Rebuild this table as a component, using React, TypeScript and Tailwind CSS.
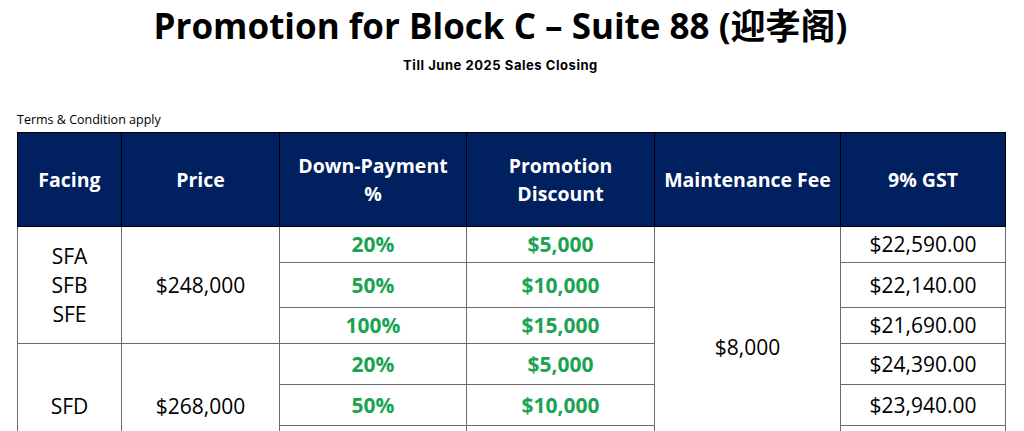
import React from 'react';

const rows = [
  { dp: '20%', disc: '$5,000', gst: '$22,590.00', h: 'h-[36px]' },
  { dp: '50%', disc: '$10,000', gst: '$22,140.00', h: 'h-[45px]' },
  { dp: '100%', disc: '$15,000', gst: '$21,690.00', h: 'h-[36px]' },
  { dp: '20%', disc: '$5,000', gst: '$24,390.00', h: 'h-[41px]' },
  { dp: '50%', disc: '$10,000', gst: '$23,940.00', h: 'h-[41px]' },
  { dp: '100%', disc: '$15,000', gst: '$23,490.00', h: 'h-[43px]' },
];

const cell = 'border border-[#6b6b6b] text-center align-middle p-0';
const head = 'border border-black text-center align-middle font-bold text-white text-[19.5px] leading-[28px] p-0';

export default function App() {
  return (
    <div className="min-h-screen bg-white text-black font-['Open_Sans',sans-serif]">
      <h1 className="pt-[4px] pr-[23px] text-center text-[35px] leading-[44px] font-bold font-['Open_Sans','Noto_Sans_CJK_SC',sans-serif]">
        Promotion for Block C – Suite 88 (迎孝阁)
      </h1>
      <p className="mt-[9px] pr-[23px] text-center text-[13px] leading-[16px] font-bold tracking-[0.55px] font-['Inter',sans-serif]">
        Till June 2025 Sales Closing
      </p>
      <p className="mt-[39px] pl-[17px] text-[12.5px] leading-[16px]">Terms &amp; Condition apply</p>
      <div className="px-[17px] mt-[4px]">
        <table className="w-[988px] table-fixed border-collapse">
          <colgroup>
            <col className="w-[104px]" />
            <col className="w-[158px]" />
            <col className="w-[187px]" />
            <col className="w-[188px]" />
            <col className="w-[186px]" />
            <col className="w-[165px]" />
          </colgroup>
          <thead>
            <tr className="h-[94px] bg-[#002060]">
              <th className={head}>Facing</th>
              <th className={head}>Price</th>
              <th className={head}>Down-Payment<br />%</th>
              <th className={head}>Promotion<br />Discount</th>
              <th className={head}>Maintenance Fee</th>
              <th className={head}>9% GST</th>
            </tr>
          </thead>
          <tbody className="text-[21px] leading-[29px]">
            {rows.map((r, i) => (
              <tr key={i} className={r.h}>
                {i === 0 && (
                  <td rowSpan={3} className={cell}>SFA<br />SFB<br />SFE</td>
                )}
                {i === 0 && <td rowSpan={3} className={cell}>$248,000</td>}
                {i === 3 && <td rowSpan={3} className={cell}>SFD</td>}
                {i === 3 && <td rowSpan={3} className={cell}>$268,000</td>}
                <td className={cell + ' font-bold text-[#1aa452]'}>{r.dp}</td>
                <td className={cell + ' font-bold text-[#1aa452]'}>{r.disc}</td>
                {i === 0 && <td rowSpan={6} className={cell}>$8,000</td>}
                <td className={cell}>{r.gst}</td>
              </tr>
            ))}
          </tbody>
        </table>
      </div>
    </div>
  );
}
